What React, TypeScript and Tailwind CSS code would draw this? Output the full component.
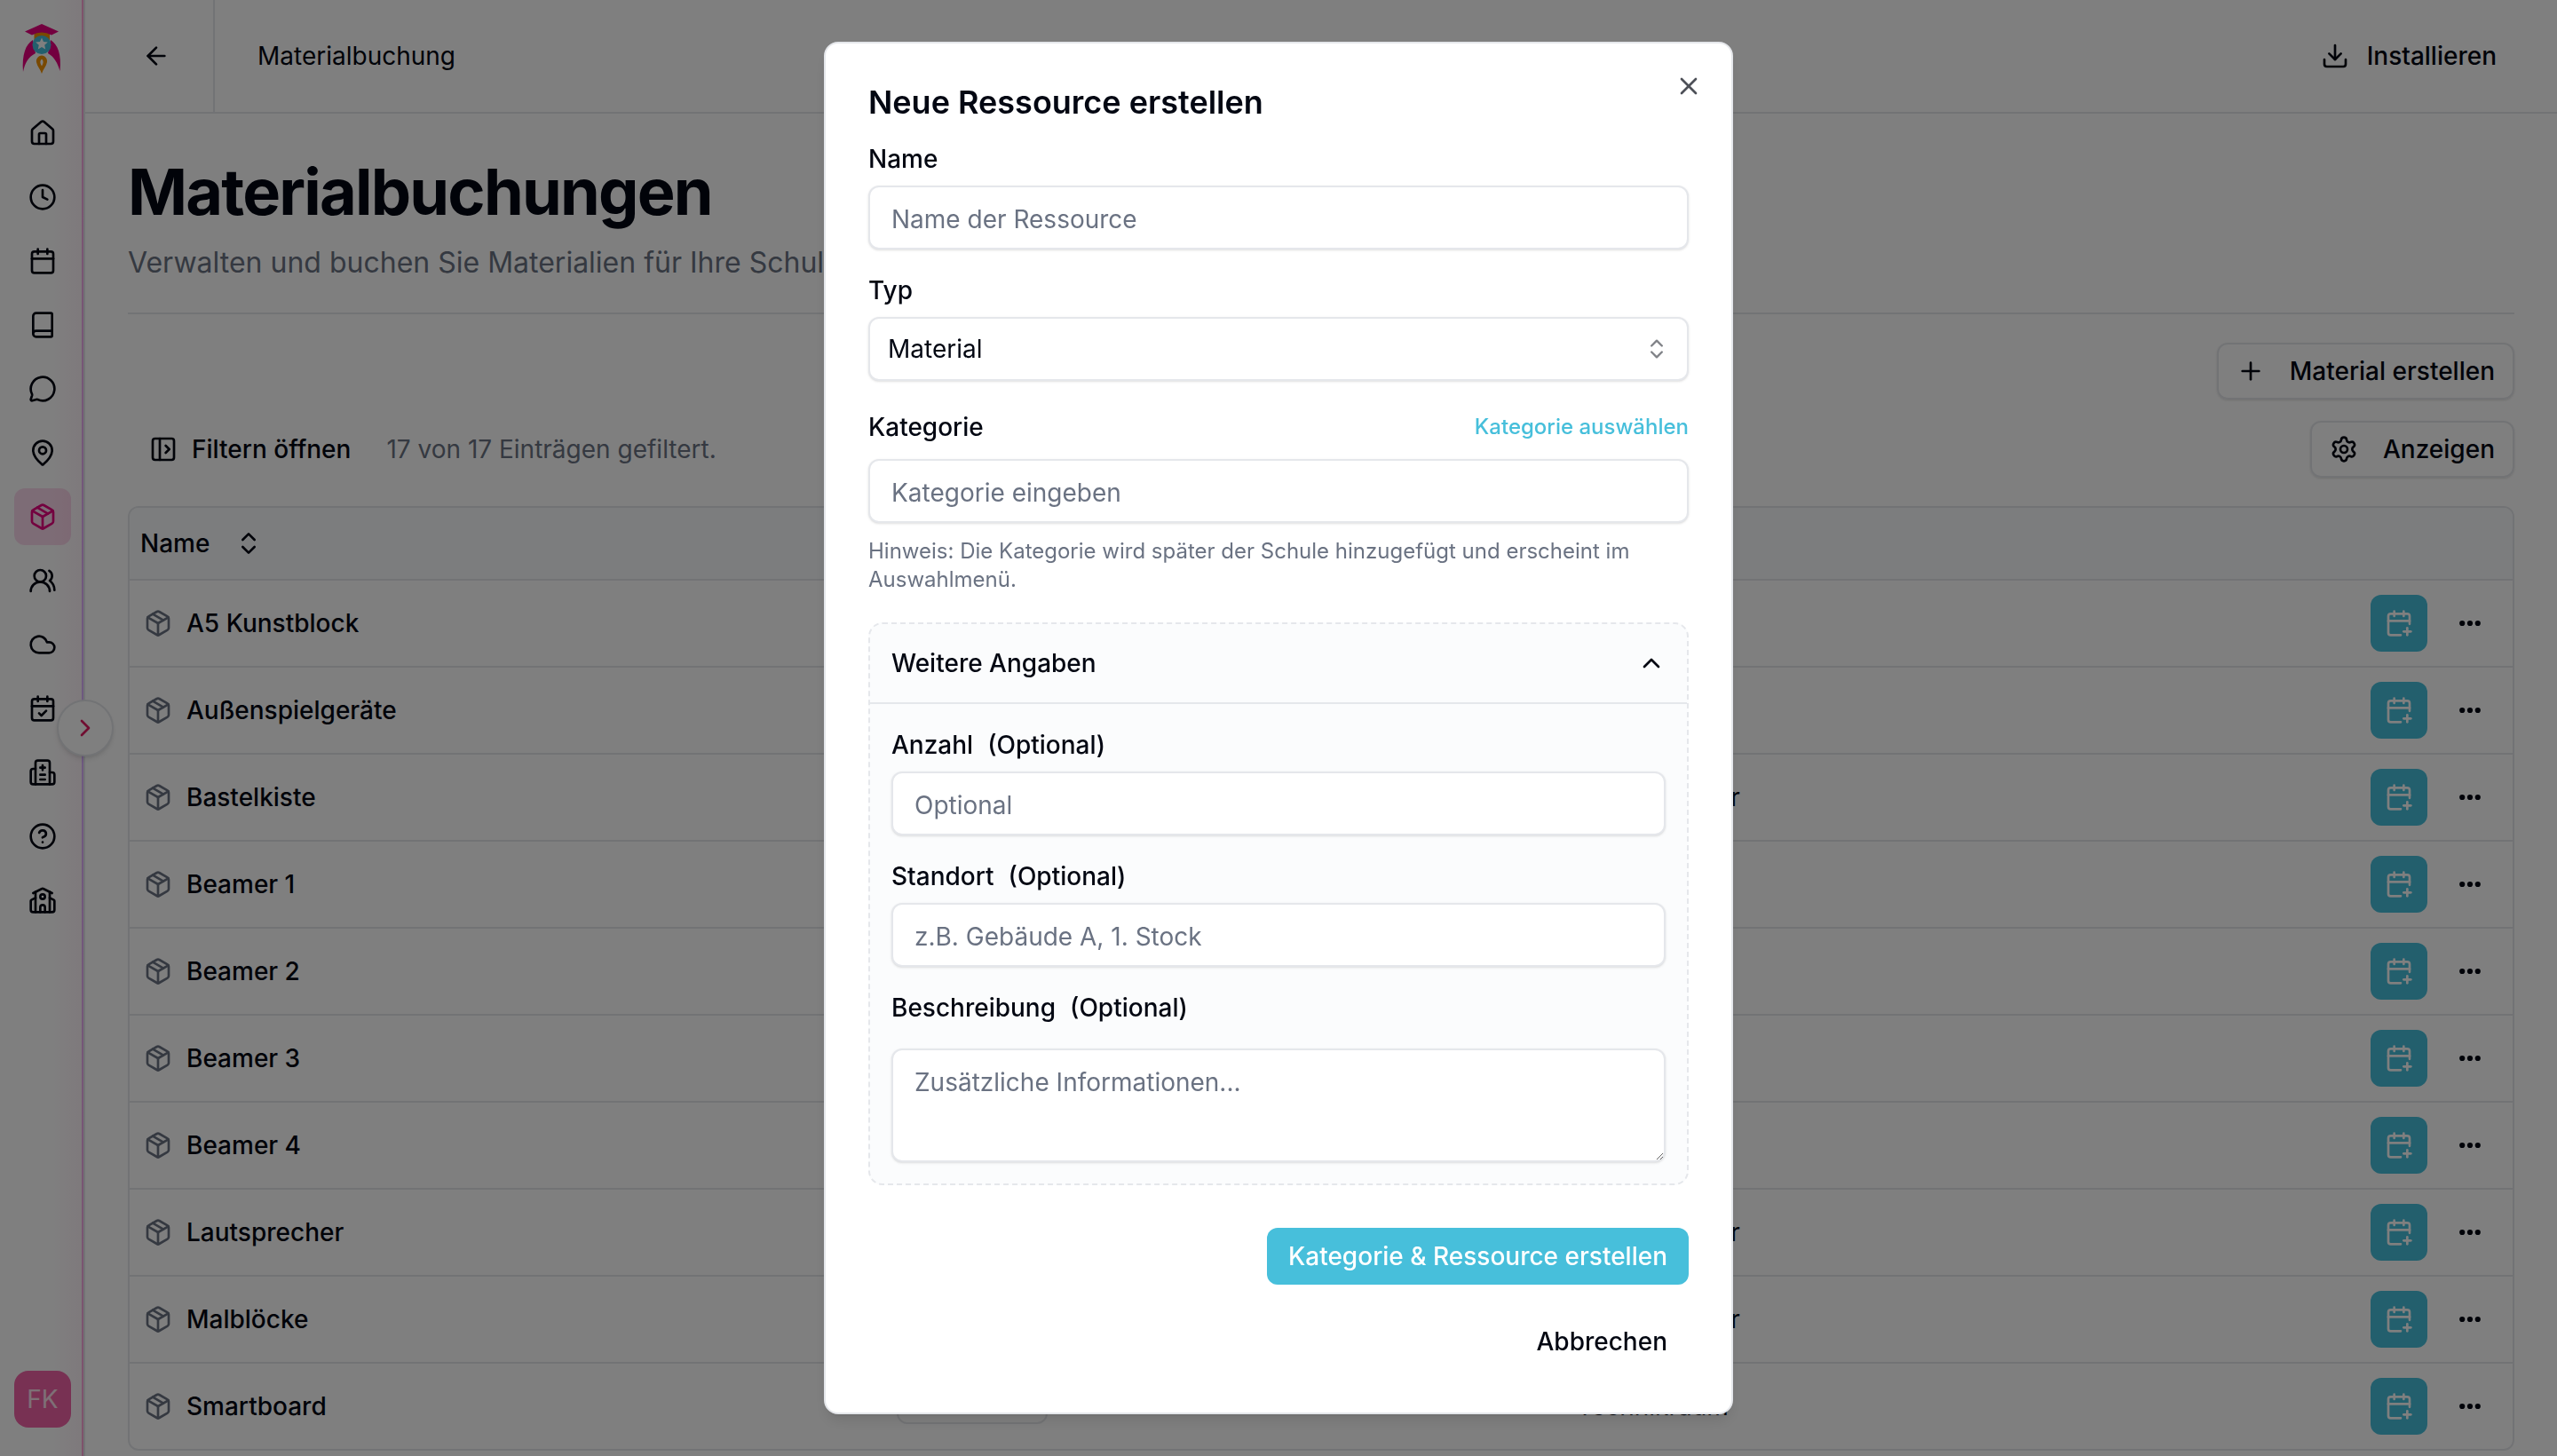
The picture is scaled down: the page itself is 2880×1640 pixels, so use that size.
"use client";

import { useState } from "react";
import {
  ArrowLeft,
  Book,
  Calendar,
  CalendarCheck,
  CalendarPlus,
  ChevronRight,
  ChevronUp,
  ChevronsUpDown,
  CircleHelp,
  Clock,
  Cloud,
  Download,
  House,
  MapPin,
  MessageCircle,
  Package,
  PanelLeftOpen,
  Plus,
  Settings,
  UsersRound,
  X,
} from "lucide-react";

const strokeProps = {
  viewBox: "0 0 24 24",
  fill: "none",
  stroke: "currentColor",
  strokeWidth: 2,
  strokeLinecap: "round" as const,
  strokeLinejoin: "round" as const,
};

const HospitalIcon = ({ className }: { className?: string }) => (
  <svg {...strokeProps} className={className}>
    <path d="M12 6v4M14 14h-4M14 18h-4M14 8h-4" />
    <path d="M18 12h2a2 2 0 0 1 2 2v6a2 2 0 0 1-2 2H4a2 2 0 0 1-2-2v-9a2 2 0 0 1 2-2h2" />
    <path d="M18 22V4a2 2 0 0 0-2-2H8a2 2 0 0 0-2 2v18" />
  </svg>
);

const SchoolIcon = ({ className }: { className?: string }) => (
  <svg {...strokeProps} className={className}>
    <path d="M14 22v-4a2 2 0 1 0-4 0v4" />
    <path d="m18 10 3.447 1.724a1 1 0 0 1 .553.894V20a2 2 0 0 1-2 2H4a2 2 0 0 1-2-2v-7.382a1 1 0 0 1 .553-.894L6 10" />
    <path d="M18 5v17M6 5v17" />
    <path d="m4 6 7.106-3.553a2 2 0 0 1 1.788 0L20 6" />
    <circle cx="12" cy="9" r="2" />
  </svg>
);

const DotsIcon = () => (
  <svg viewBox="0 0 32 32" className="size-8" fill="currentColor">
    <circle cx="7.2" cy="16" r="3.1" />
    <circle cx="16" cy="16" r="3.1" />
    <circle cx="24.8" cy="16" r="3.1" />
  </svg>
);

const Logo = () => (
  <svg viewBox="16 24 64 64" className="size-16">
    {/* wings */}
    <path d="M37 45C29 50 24.500 61 26 81C28 71 32 64 40 60Z" fill="#e6007e" />
    <path d="M57 45C65 50 69.500 61 67.500 80C65 71 61 64 54 60Z" fill="#e6007e" />
    {/* body */}
    <path d="M38.500 35H56V45H38.500Z" fill="#f39200" />
    <circle cx="47" cy="50.500" r="10.500" fill="#47bfdb" />
    <path d="M47 42.500l2 4.500 4.800.5-3.600 3.200 1 4.800-4.200-2.500-4.200 2.500 1-4.800-3.600-3.200 4.800-.5z" fill="#fff" />
    {/* hat */}
    <path d="M28 35.500L47 27L66 35.500L58 39.500Q47 33.500 36 39.500Z" fill="#e6007e" />
    {/* flame */}
    <path fillRule="evenodd" d="M47 62.500C51 63 53.500 66 53 70C52 75 48.500 78 47 83C45.500 78 42 75 41 70C40.500 66 43 63 47 62.500ZM47 66.500C44.800 68.500 44.800 71 47 74.500C49.200 71 49.200 68.500 47 66.500Z" fill="#f39200" />
  </svg>
);

const navItems = [
  { label: "Start", icon: House },
  { label: "Zeiten", icon: Clock },
  { label: "Kalender", icon: Calendar },
  { label: "Klassenbuch", icon: Book },
  { label: "Nachrichten", icon: MessageCircle },
  { label: "Räume", icon: MapPin },
  { label: "Materialbuchung", icon: Package, active: true },
  { label: "Benutzer", icon: UsersRound },
  { label: "Cloud", icon: Cloud },
  { label: "Termine", icon: CalendarCheck },
  { label: "Krankmeldungen", icon: HospitalIcon },
  { label: "Hilfe", icon: CircleHelp },
  { label: "Schule", icon: SchoolIcon },
];

const materials = [
  { name: "A5 Kunstblock", location: "" },
  { name: "Außenspielgeräte", location: "" },
  { name: "Bastelkiste", location: "Lehrerzimmer" },
  { name: "Beamer 1", location: "" },
  { name: "Beamer 2", location: "" },
  { name: "Beamer 3", location: "" },
  { name: "Beamer 4", location: "" },
  { name: "Lautsprecher", location: "Lehrerzimmer" },
  { name: "Malblöcke", location: "Lehrerzimmer" },
  { name: "Smartboard", location: "Technikraum", hasCategory: true },
];

const fieldClass =
  "block w-full rounded-xl border-2 border-gray-200 bg-white px-6 text-[28px] shadow-sm placeholder:text-gray-500";

const Sidebar = () => (
  <aside className="relative flex w-24 shrink-0 flex-col items-center bg-linear-to-r from-white from-60% to-pink-50 pt-6 pb-8">
    <Logo />
    <nav className="mt-[30px] flex flex-1 flex-col gap-2">
      {navItems.map(({ label, icon: Icon, active }) => (
        <a
          key={label}
          href="#"
          aria-label={label}
          className={
            active
              ? "flex size-16 items-center justify-center rounded-xl bg-[#e6007e]/15 text-[#e6007e]"
              : "flex size-16 items-center justify-center rounded-xl"
          }
        >
          <Icon className="size-8" />
        </a>
      ))}
    </nav>
    <button className="flex size-16 items-center justify-center rounded-2xl bg-[#f062a6] text-[28px] text-white/80">
      FK
    </button>
    <div className="absolute inset-y-0 right-0 w-1 border-r-2 border-gray-200 bg-linear-to-b from-pink-300 via-purple-300 to-pink-300 bg-clip-padding" />
    <button
      aria-label="Seitenleiste öffnen"
      className="absolute top-1/2 -right-8 flex size-16 -translate-y-1/2 items-center justify-center rounded-full border-2 border-gray-200 bg-white text-[#e11d63] shadow-md"
    >
      <ChevronRight className="size-8" />
    </button>
  </aside>
);

const MaterialTable = () => (
  <div className="mt-8 overflow-hidden rounded-xl border-2 border-gray-200">
    <table className="w-full table-fixed border-separate border-spacing-0 text-left font-medium">
      <thead className="bg-slate-50">
        <tr>
          <th className="h-[82px] w-[848px] border-b-2 border-gray-200 pl-3 font-medium">
            <button className="flex items-center gap-7">
              Name
              <ChevronsUpDown className="size-8" />
            </button>
          </th>
          <th className="w-[766px] border-b-2 border-gray-200" aria-label="Kategorie"></th>
          <th className="border-b-2 border-gray-200" aria-label="Standort"></th>
          <th className="w-[176px] border-b-2 border-gray-200" aria-label="Aktionen"></th>
        </tr>
      </thead>
      <tbody className="[&>tr:last-child>td]:h-24 [&>tr:last-child>td]:border-b-0">
        {materials.map((item) => (
          <tr key={item.name}>
            <td className="h-[98px] border-b-2 border-gray-200 px-4">
              <div className="flex items-center gap-4">
                <Package className="size-8 text-gray-500" />
                {item.name}
              </div>
            </td>
            <td className="border-b-2 border-gray-200 px-4">
              {item.hasCategory && (
                <span className="block h-10 w-[170px] rounded-xl border-2 border-gray-200" />
              )}
            </td>
            <td className="border-b-2 border-gray-200 px-4 font-normal">{item.location}</td>
            <td className="border-b-2 border-gray-200 pr-4">
              <div className="flex justify-end gap-4">
                <button
                  aria-label={item.name + " buchen"}
                  className="flex size-16 items-center justify-center rounded-xl bg-[#47bfdb] text-white"
                >
                  <CalendarPlus className="size-8" />
                </button>
                <button aria-label="Mehr" className="flex size-16 items-center justify-center">
                  <DotsIcon />
                </button>
              </div>
            </td>
          </tr>
        ))}
      </tbody>
    </table>
  </div>
);

const ResourceDialog = () => {
  const [name, setName] = useState("");
  const [type, setType] = useState("material");
  const [category, setCategory] = useState("");
  const [open, setOpen] = useState(true);

  return (
    <div className="fixed inset-0 z-50 flex items-center justify-center bg-black/50">
      <div
        role="dialog"
        aria-labelledby="dialog-title"
        className="relative w-full max-w-5xl rounded-2xl border-2 border-gray-200 bg-white p-12 leading-none shadow-lg"
      >
        <h2 id="dialog-title" className="text-4xl leading-none font-semibold">
          Neue Ressource erstellen
        </h2>
        <button aria-label="Schließen" className="absolute top-8 right-8 opacity-70">
          <X className="size-8" />
        </button>

        <form className="mt-8 flex flex-col gap-8" onSubmit={(e) => e.preventDefault()}>
          <div className="flex flex-col gap-4">
            <label htmlFor="name" className="font-medium">Name</label>
            <input
              id="name"
              placeholder="Name der Ressource"
              value={name}
              onChange={(e) => setName(e.target.value)}
              className={fieldClass + " h-18 pt-1"}
            />
          </div>

          <div className="flex flex-col gap-4">
            <label htmlFor="type" className="font-medium">Typ</label>
            <div className="relative">
              <select
                id="type"
                value={type}
                onChange={(e) => setType(e.target.value)}
                className="block h-18 w-full appearance-none rounded-xl border-2 border-gray-200 bg-white px-5 text-[28px] shadow-sm"
              >
                <option value="material">Material</option>
                <option value="room">Raum</option>
              </select>
              <ChevronsUpDown className="pointer-events-none absolute top-1/2 right-[22px] size-7 -translate-y-1/2 opacity-50" />
            </div>
          </div>

          <div className="flex flex-col gap-4">
            <div className="flex h-10 items-center justify-between">
              <label htmlFor="category" className="font-medium">Kategorie</label>
              <button type="button" className="text-2xl font-medium text-[#47bfdb]">
                Kategorie auswählen
              </button>
            </div>
            <input
              id="category"
              placeholder="Kategorie eingeben"
              value={category}
              onChange={(e) => setCategory(e.target.value)}
              className={fieldClass + " h-18 pt-1"}
            />
            <p className="text-2xl text-gray-500">
              Hinweis: Die Kategorie wird später der Schule hinzugefügt und erscheint im Auswahlmenü.
            </p>
          </div>

          <div className="rounded-2xl border-2 border-dashed border-gray-200 bg-slate-50/60">
            <button
              type="button"
              onClick={() => setOpen(!open)}
              className="flex h-[90px] w-full items-center justify-between border-b-2 border-gray-200 px-6 font-medium"
            >
              Weitere Angaben
              <ChevronUp className="size-8" />
            </button>
            {open && (
              <div className="flex flex-col gap-8 px-6 pt-8 pb-6">
                <div className="flex flex-col gap-4">
                  <label htmlFor="amount" className="flex gap-4 font-medium">
                    Anzahl <span>(Optional)</span>
                  </label>
                  <input id="amount" placeholder="Optional" className={fieldClass + " h-18 pt-1"} />
                </div>
                <div className="flex flex-col gap-4">
                  <label htmlFor="location" className="flex gap-4 font-medium">
                    Standort <span>(Optional)</span>
                  </label>
                  <input id="location" placeholder="z.B. Gebäude A, 1. Stock" className={fieldClass + " h-18 pt-1"} />
                </div>
                <div className="flex flex-col gap-8">
                  <label htmlFor="description" className="flex gap-4 font-medium">
                    Beschreibung <span>(Optional)</span>
                  </label>
                  <textarea
                    id="description"
                    placeholder="Zusätzliche Informationen..."
                    className={fieldClass + " h-32 py-4 leading-10"}
                  />
                </div>
              </div>
            )}
          </div>

          <div className="mt-4 flex flex-col items-end gap-8">
            <button type="submit" className="h-16 rounded-xl bg-[#47bfdb] px-6 font-medium text-white">
              Kategorie & Ressource erstellen
            </button>
            <button type="button" className="h-16 rounded-xl px-6 font-medium">
              Abbrechen
            </button>
          </div>
        </form>
      </div>
    </div>
  );
};

const MaterialPage = () => {
  return (
    <div className="flex h-screen overflow-hidden bg-white font-['Inter',sans-serif] text-[28px] leading-10 text-gray-950">
      <Sidebar />
      <div className="min-w-0 flex-1">
        <header className="flex h-32 items-center border-b-2 border-gray-200 pr-12">
          <a
            href="#"
            aria-label="Zurück"
            className="flex w-[146px] items-center justify-center self-stretch border-r-2 border-gray-200 pl-4"
          >
            <ArrowLeft className="size-8" />
          </a>
          <span className="ml-12">Materialbuchung</span>
          <button className="mr-5 ml-auto flex items-center gap-5 font-medium">
            <Download className="size-8" />
            Installieren
          </button>
        </header>

        <main className="p-12">
          <h1 className="text-7xl leading-20 font-bold tracking-tight">Materialbuchungen</h1>
          <p className="mt-4 text-[32px] leading-12 text-gray-500">
            Verwalten und buchen Sie Materialien für Ihre Schule.
          </p>
          <hr className="mt-8 border-t-2 border-gray-200" />

          <div className="mt-8 flex justify-end">
            <button className="flex h-16 items-center gap-7 rounded-xl border-2 border-gray-200 px-5 font-medium shadow-sm">
              <Plus className="size-8" />
              Material erstellen
            </button>
          </div>
          <div className="mt-6 flex items-center gap-4">
            <button className="flex h-16 items-center gap-4 px-6 font-medium">
              <PanelLeftOpen className="size-8" />
              Filtern öffnen
            </button>
            <span className="text-gray-500">17 von 17 Einträgen gefiltert.</span>
            <button className="ml-auto flex h-16 items-center gap-7 rounded-xl border-2 border-gray-200 px-5 font-medium shadow-sm">
              <Settings className="size-8" />
              Anzeigen
            </button>
          </div>

          <MaterialTable />
        </main>
      </div>
      <ResourceDialog />
    </div>
  );
};

export default MaterialPage;
